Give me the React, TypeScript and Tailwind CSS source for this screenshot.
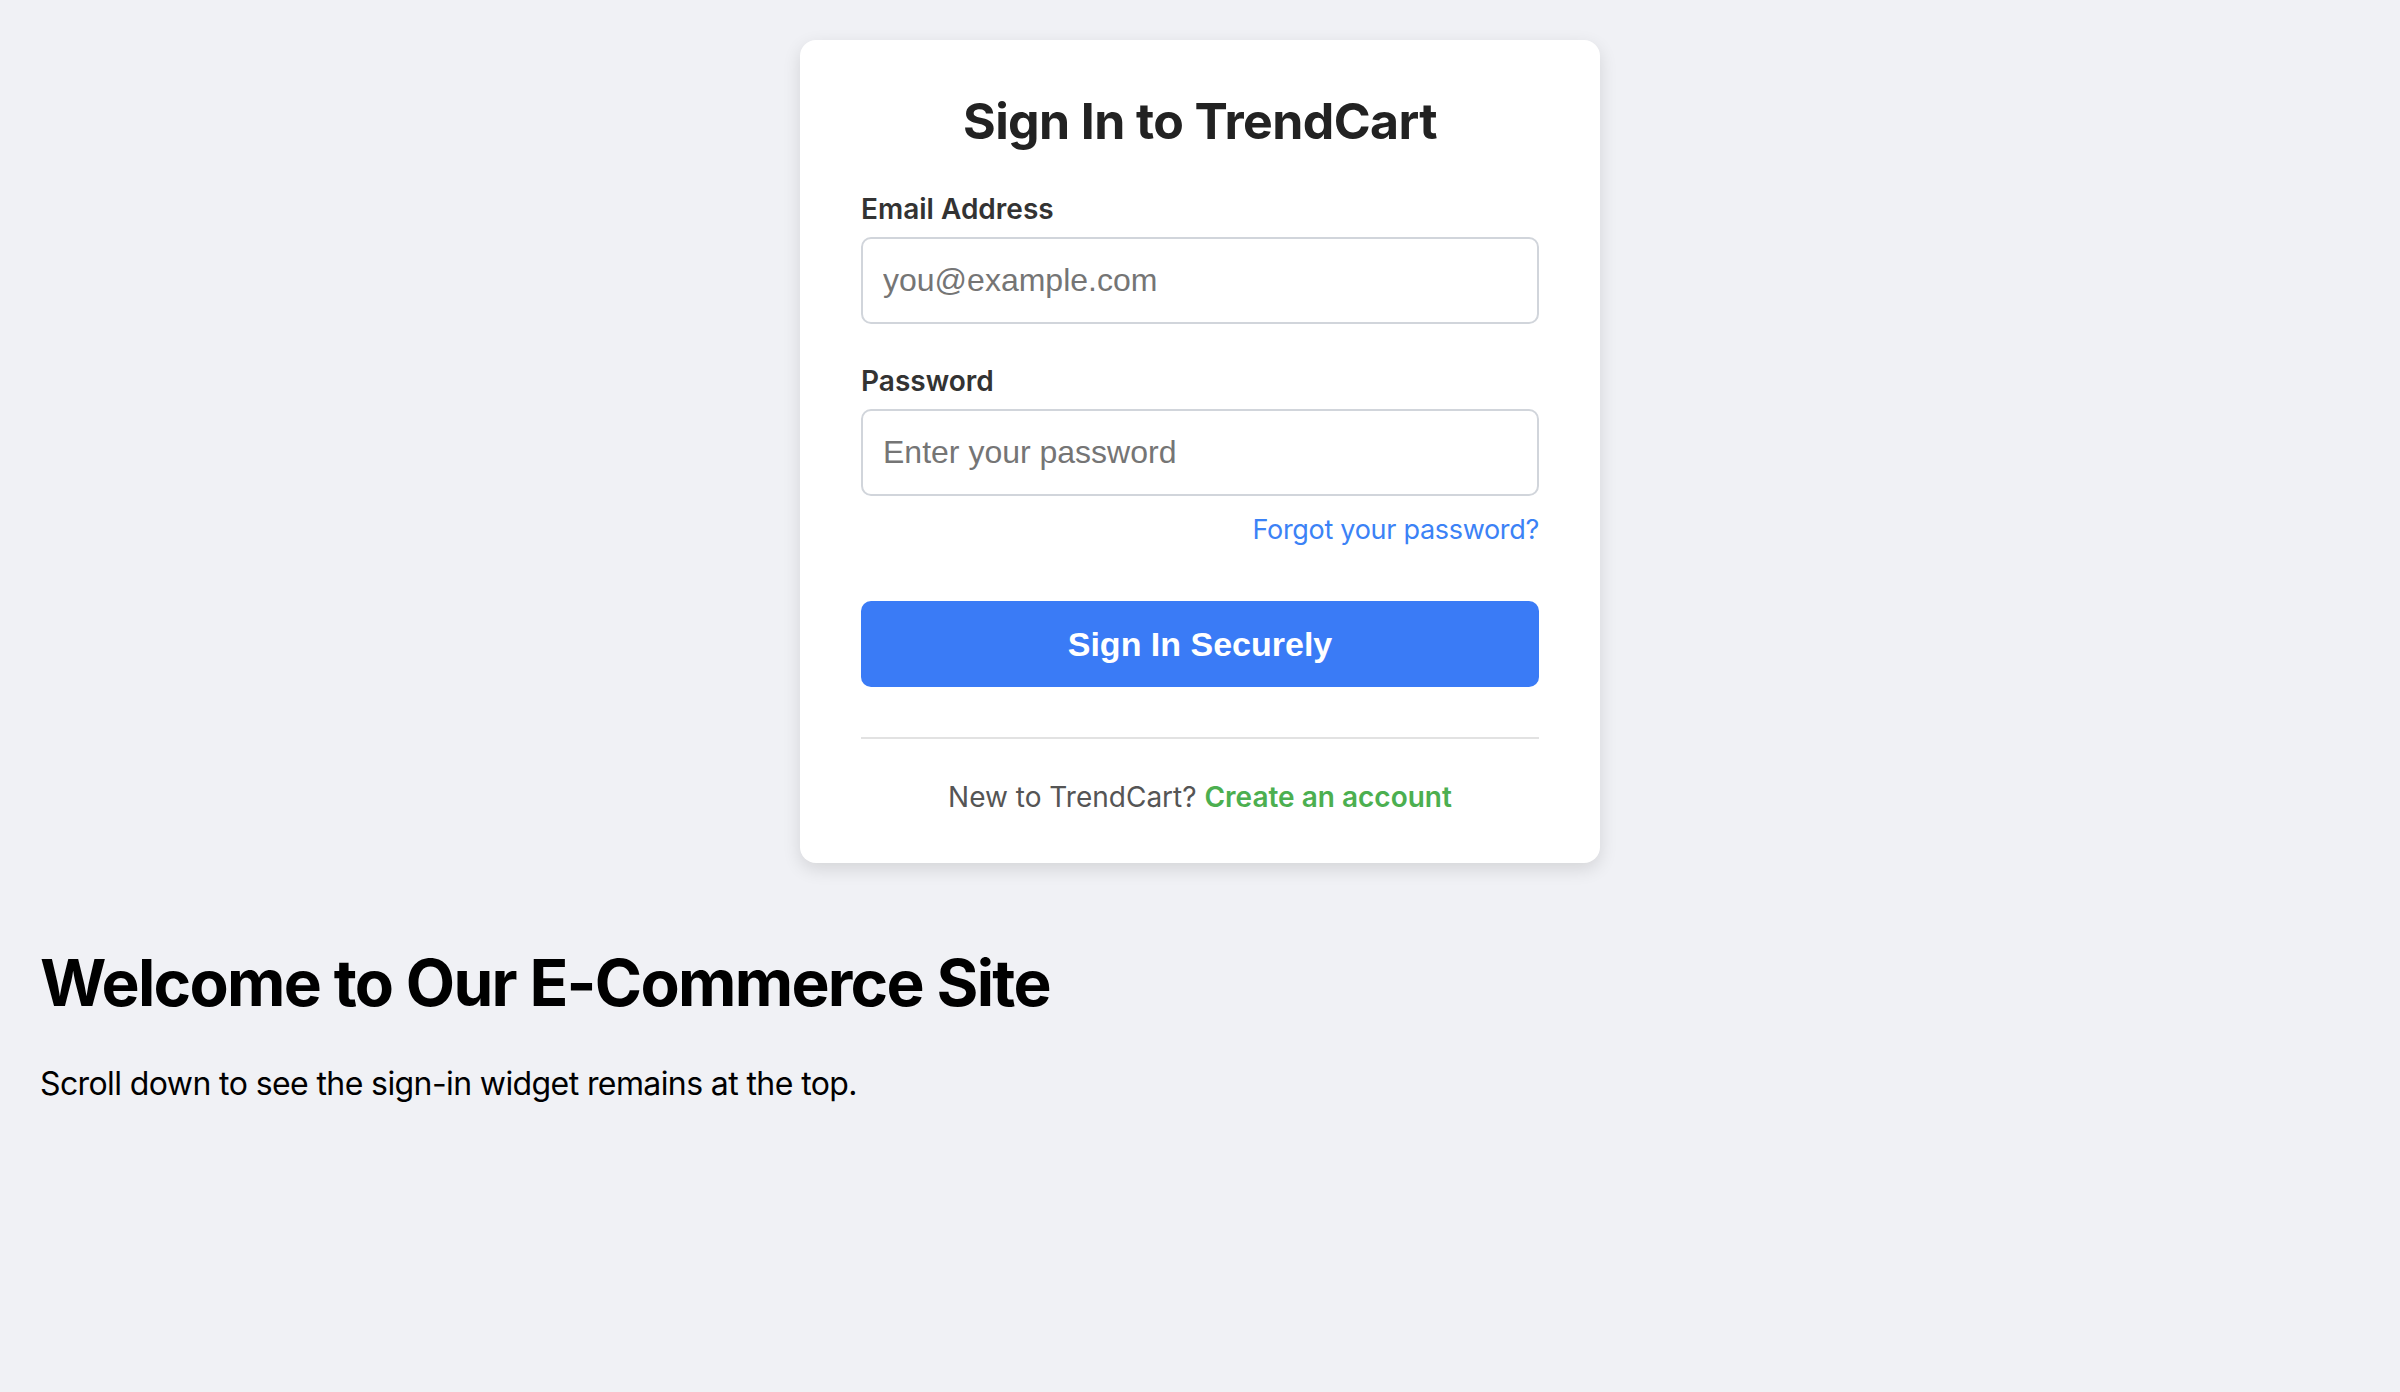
import { useState } from 'react';

export default function App() {
  const [email, setEmail] = useState('');
  const [password, setPassword] = useState('');

  return (
    <div className="min-h-screen bg-[#f0f1f5] px-[40px] pt-[40px] pb-[80px] font-['Inter',sans-serif]">
      {/* Sign-in widget */}
      <div className="sticky top-[40px] mx-auto w-[800px] rounded-[16px] bg-white px-[61px] pt-[51px] pb-[49px] shadow-[0_6px_18px_rgba(0,0,0,0.12)]">
        <h2 className="text-center text-[50px] leading-[60px] font-bold tracking-[-0.6px] text-[#222]">Sign In to TrendCart</h2>

        <form className="mt-[41px]" onSubmit={(e) => e.preventDefault()}>
          <label htmlFor="email" className="block text-[28px] leading-[34px] font-semibold text-[#333]">
            Email Address
          </label>
          <input
            id="email"
            type="email"
            value={email}
            onChange={(e) => setEmail(e.target.value)}
            placeholder="you@example.com"
            className="mt-[11px] block h-[87px] w-full rounded-[10px] border-2 border-[#d1d5db] bg-white px-[20px] font-['Liberation_Sans',Arial,sans-serif] text-[32px] text-[#222] placeholder:text-[#757575] focus:outline-none"
          />

          <label htmlFor="password" className="mt-[40px] block text-[28px] leading-[34px] font-semibold text-[#333]">
            Password
          </label>
          <input
            id="password"
            type="password"
            value={password}
            onChange={(e) => setPassword(e.target.value)}
            placeholder="Enter your password"
            className="mt-[11px] block h-[87px] w-full rounded-[10px] border-2 border-[#d1d5db] bg-white px-[20px] font-['Liberation_Sans',Arial,sans-serif] text-[32px] text-[#222] placeholder:text-[#757575] focus:outline-none"
          />

          <div className="mt-[17px] flex justify-end">
            <a href="#" className="text-[27px] leading-[33px] tracking-[-0.3px] text-[#3b82f6]">
              Forgot your password?
            </a>
          </div>

          <button
            type="submit"
            className="mt-[55px] block h-[86px] w-full rounded-[10px] bg-[#3a7bf6] font-['Liberation_Sans',Arial,sans-serif] text-[34px] font-bold text-white"
          >
            Sign In Securely
          </button>
        </form>

        <div className="mt-[50px] h-[2px] bg-[#e2e2e2]"></div>

        <p className="mt-[41px] text-center text-[28px] leading-[34px] text-[#555]">
          New to TrendCart?{' '}
          <a href="#" className="font-semibold text-[#4caf50]">
            Create an account
          </a>
        </p>
      </div>

      <h1 className="mt-[81px] text-[64px] leading-[77px] font-bold tracking-[-1.7px] text-black">
        Welcome to Our E-Commerce Site
      </h1>
      <p className="mt-[43px] text-[32px] leading-[39px] tracking-[-0.6px] text-black">
        Scroll down to see the sign-in widget remains at the top.
      </p>
    </div>
  );
}
